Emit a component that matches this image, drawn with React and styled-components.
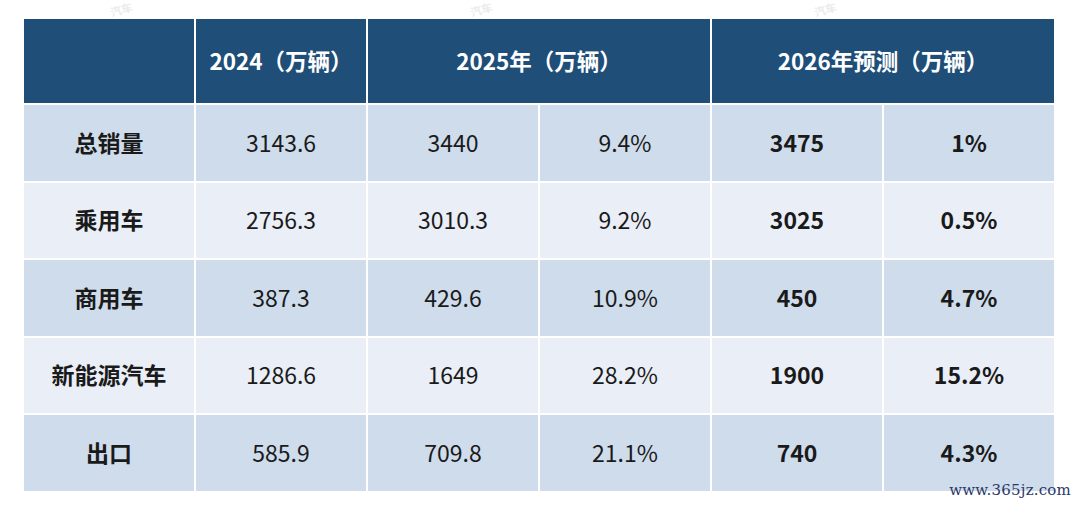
import React from 'react';
import styled, { createGlobalStyle } from 'styled-components';

const GlobalStyle = createGlobalStyle`
  body {
    margin: 0;
    background: #ffffff;
    font-family: "Noto Sans CJK SC", "Noto Sans", sans-serif;
  }
`;

const Page = styled.div`
  position: relative;
  width: 1080px;
  height: 507px;
  padding: 19px 26px 0 24px;
  box-sizing: border-box;
  overflow: hidden;
`;

const Table = styled.div`
  position: relative;
  z-index: 1;
  display: grid;
  grid-template-columns: repeat(6, 1fr);
  grid-template-rows: 84px repeat(5, 75.5px);
  gap: 2px;
  background: #ffffff;
`;

const HeadCell = styled.div`
  grid-column: span ${(p) => p.span || 1};
  background: #1f4e79;
  color: #ffffff;
  font-weight: 700;
  font-size: 22.5px;
  display: flex;
  align-items: center;
  justify-content: center;
  padding-bottom: 2px;
`;

const Cell = styled.div`
  background: ${(p) => (p.alt ? '#e9eef7' : '#cfdcec')};
  color: #1a1a1a;
  font-size: 23px;
  font-weight: ${(p) => (p.bold ? 700 : 400)};
  display: flex;
  align-items: center;
  justify-content: center;
  padding-bottom: 2px;
`;

// faint site watermark above the table
const Mark = styled.span`
  position: absolute;
  left: ${(p) => p.x}px;
  top: 1px;
  display: inline-block;
  transform: rotate(-15deg);
  color: #ebebeb;
  font-size: 11px;
  font-weight: 700;
  line-height: 16px;
  pointer-events: none;
`;

const Site = styled.span`
  position: absolute;
  z-index: 2;
  right: 9px;
  bottom: 8px;
  font-family: "DejaVu Serif", "Liberation Serif", serif;
  font-size: 15px;
  color: #2a3868;
  letter-spacing: 0.2px;
`;

const rows = [
  ['总销量', '3143.6', '3440', '9.4%', '3475', '1%'],
  ['乘用车', '2756.3', '3010.3', '9.2%', '3025', '0.5%'],
  ['商用车', '387.3', '429.6', '10.9%', '450', '4.7%'],
  ['新能源汽车', '1286.6', '1649', '28.2%', '1900', '15.2%'],
  ['出口', '585.9', '709.8', '21.1%', '740', '4.3%'],
];

export default function App() {
  return (
    <Page>
      <GlobalStyle />
      <Mark x={110}>汽车</Mark>
      <Mark x={470}>汽车</Mark>
      <Mark x={814}>汽车</Mark>
      <Table>
        <HeadCell />
        <HeadCell>2024（万辆）</HeadCell>
        <HeadCell span={2}>2025年（万辆）</HeadCell>
        <HeadCell span={2}>2026年预测（万辆）</HeadCell>
        {rows.map((r, i) =>
          r.map((v, j) => (
            <Cell key={i + '-' + j} alt={i % 2 === 1} bold={j === 0 || j >= 4}>
              {v}
            </Cell>
          ))
        )}
      </Table>
      <Site>www.365jz.com</Site>
    </Page>
  );
}
